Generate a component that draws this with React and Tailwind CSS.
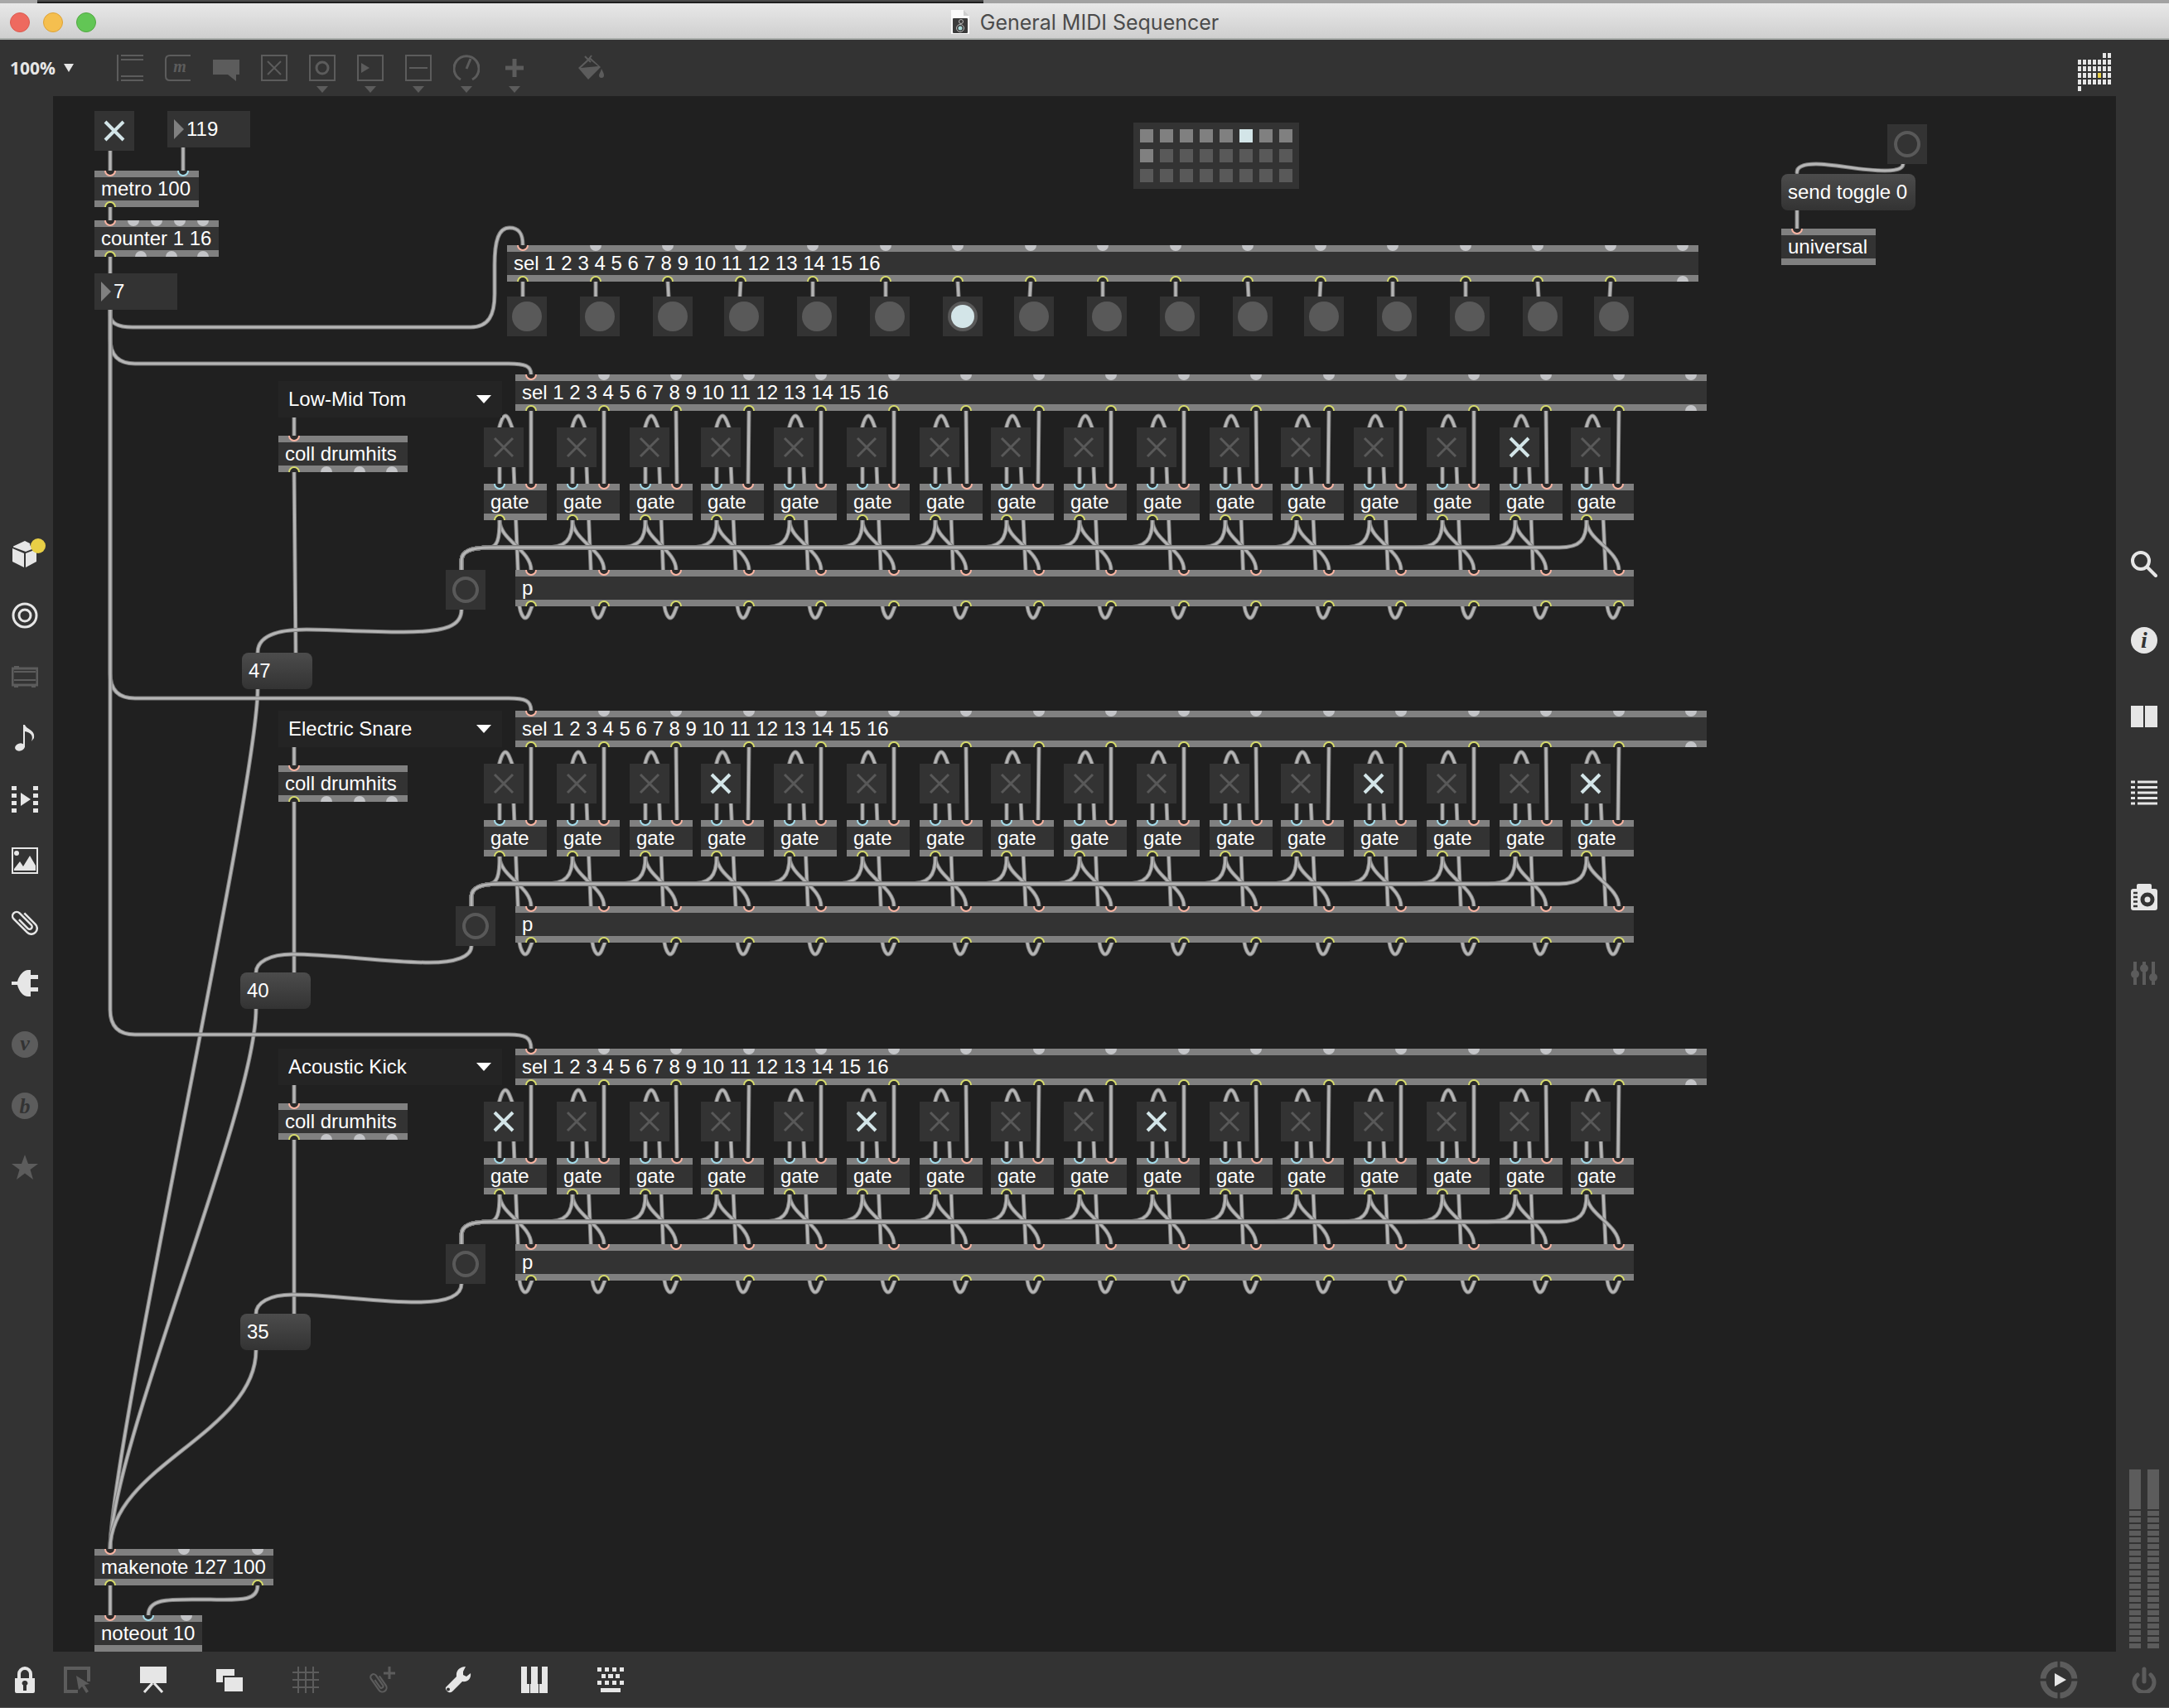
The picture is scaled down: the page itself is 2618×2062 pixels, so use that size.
import React from "react";

const OFFSETS = [0, 88, 176, 262, 350, 438, 526, 612, 700, 788, 876, 962, 1050, 1138, 1226, 1312];
const STEPS = OFFSETS.map((_, i) => i);
const PORT_STEP = Array.from({ length: 17 }, (_, i) => 19 + Math.round(i * 87.5));
const SEL_TEXT = "sel 1 2 3 4 5 6 7 8 9 10 11 12 13 14 15 16";

const TRACKS = [
  {
    name: "Low-Mid Tom", top: 336, feed: 323, menuY: 344, collY: 410, note: 47, noteX: 228, noteY: 672, bangX: 474, on: [14],
    cord: "M493 620C493 639 476 647 423 647C376 647 336 644 306 644C266 644 247 654 247 672",
    out: "M247 716C247 836 69 1634 69 1754",
    coll: "M291 454L293 672",
  },
  {
    name: "Electric Snare", top: 742, feed: 727, menuY: 742, collY: 808, note: 40, noteX: 226, noteY: 1058, bangX: 486, on: [3, 12, 15],
    cord: "M505 1026C505 1039 486 1046 454 1046C406 1046 336 1036 289 1036C261 1036 245 1046 245 1058",
    out: "M245 1102C245 1222 69 1634 69 1754",
    coll: "M291 852V1058",
  },
  {
    name: "Acoustic Kick", top: 1150, feed: 1133, menuY: 1150, collY: 1216, note: 35, noteX: 226, noteY: 1470, bangX: 474, on: [0, 5, 9],
    cord: "M493 1434C493 1447 479 1456 439 1456C390 1456 336 1447 289 1447C261 1447 245 1457 245 1470",
    out: "M245 1514C245 1614 69 1654 69 1754",
    coll: "M291 1260V1470",
  },
];

const hot = (...xs) => xs.map((x) => ({ x, c: "#f9b4a2" }));
const cold = (...xs) => xs.map((x) => ({ x, c: "#a4dcea" }));
const out = (...xs) => xs.map((x) => ({ x, c: "#d6db6a" }));
const idle = (...xs) => xs.map((x) => ({ x }));

/* ---------- patch cords ---------- */

function trackCords(t) {
  const gateTop = t.top + 132;
  const gateBottom = gateTop + 44;
  const pTop = t.top + 236;
  const pBottom = pTop + 44;
  const toggleTop = t.top + 64;
  const bus = gateBottom + 33;
  const bx = t.bangX + 19;
  const cords = [
    `M69 258V${t.feed - 30}Q69 ${t.feed} 99 ${t.feed}H550C570 ${t.feed} 577 ${t.feed + 3} 577 ${t.top}`,
    `M291 ${t.menuY + 42}V${t.collY}`,
    t.coll,
    t.cord,
    t.out,
  ];
  STEPS.forEach((i) => {
    const p = 558 + PORT_STEP[i];
    const g = 539 + OFFSETS[i];
    const turn = i === 0 ? `C${g} ${gateBottom + 24} ${g - 3} ${bus - 2} ${g - 11} ${bus}` : `C${g} ${gateBottom + 24} ${g - 8} ${bus} ${g - 33} ${bus}`;
    cords.push(
      `M${p} ${t.top + 44}L${g + 38} ${gateTop}`,
      `M${p + 1} ${pBottom}C${p - 2} ${pBottom + 8} ${p - 4} ${pBottom + 14} ${p - 7} ${pBottom + 14}C${p - 10} ${pBottom + 14} ${p - 13} ${pBottom + 7} ${p - 14} ${pBottom}L${g + 15} ${toggleTop}C${g + 12} ${toggleTop - 8} ${g + 10} ${toggleTop - 14} ${g + 7} ${toggleTop - 14}C${g + 4} ${toggleTop - 14} ${g + 1} ${toggleTop - 6} ${g - 1} ${toggleTop + 3}`,
      `M${g} ${toggleTop + 48}V${gateTop}`,
      `M${g} ${gateBottom}C${g} ${gateBottom + 24} ${p} ${gateBottom + 36} ${p} ${pTop}`,
      `M${g} ${gateBottom}${turn}H${bx + 35}C${bx + 12} ${bus} ${bx} ${bus + 4} ${bx} ${bus + 16}V${pTop}`
    );
  });
  return cords;
}

const CORDS = [
  "M69 66V90",
  "M157 62V90",
  "M69 134V150",
  "M69 194V214",
  "M69 258V264Q69 279 96 279H504C526 279 533 264 533 239V204C533 174 538 159 551 159C564 159 567 168 567 180",
  ...STEPS.map((i) => `M${548 + PORT_STEP[i]} 224L${567 + OFFSETS[i]} 242`),
  ...TRACKS.flatMap(trackCords),
  "M69 1798V1834",
  "M247 1798C247 1819 221 1815 181 1815C141 1815 115 1813 115 1834",
  "M2233 82C2233 88 2224 90 2211 90C2181 90 2151 82 2128 82C2116 82 2105 84 2105 92",
  "M2105 138V160",
];

function Cords() {
  return (
    <svg className="pointer-events-none absolute inset-0 size-full" fill="none" strokeLinecap="round" aria-hidden="true">
      {CORDS.map((d, i) => (
        <g key={i}>
          <path d={d} stroke="#7c7c7c" strokeWidth="5" />
          <path d={d} stroke="#b5b5b5" strokeWidth="3" />
        </g>
      ))}
    </svg>
  );
}

/* ---------- patcher objects ---------- */

function Node({ x, y, w, children }) {
  return (
    <div className="absolute" style={{ left: x, top: y, width: w }}>
      {children}
    </div>
  );
}

function Ports({ ports, y }) {
  return ports.map(({ x, c }) =>
    c ? <circle key={x} cx={x} cy={y} r="6" fill="#2b2b2b" stroke={c} strokeWidth="2" /> : <circle key={x} cx={x} cy={y} r="7" fill="#c3c4c7" />
  );
}

function Obj({ x, y, w, text, ins = [], outs = [] }) {
  return (
    <Node x={x} y={y} w={w}>
      <div className="border-y-8 border-[#808080] bg-[#333333] px-2 leading-7 whitespace-nowrap">{text}</div>
      <svg className="absolute inset-0 size-full" aria-hidden="true">
        <Ports ports={ins} y={0} />
        <Ports ports={outs} y={44} />
      </svg>
    </Node>
  );
}

function Toggle({ x, y, on, label }) {
  return (
    <Node x={x} y={y}>
      <input type="checkbox" aria-label={label} defaultChecked={on} className="peer block size-12 appearance-none bg-[#333333]" />
      <svg
        viewBox="0 0 48 48"
        className="pointer-events-none absolute inset-0 size-12 stroke-[#595959] stroke-3 peer-checked:stroke-[#d3e5e8] peer-checked:stroke-4"
        aria-hidden="true"
      >
        <path d="M13 13L35 35M35 13L13 35" />
      </svg>
    </Node>
  );
}

function Bang({ x, y, label, kind = "ring" }) {
  return (
    <Node x={x} y={y}>
      <button type="button" aria-label={label} className="block size-12 bg-[#333333]">
        <svg viewBox="0 0 48 48" className="size-12" aria-hidden="true">
          {kind === "ring" ? <circle cx="24" cy="24" r="14" fill="none" stroke="#595959" strokeWidth="4" /> : <circle cx="24" cy="24" r="18" fill="#595959" />}
          {kind === "lit" && <circle cx="24" cy="24" r="14" fill="#d3e5e8" />}
        </svg>
      </button>
    </Node>
  );
}

function NumberBox({ x, y, value, label }) {
  return (
    <Node x={x} y={y} w={100}>
      <input type="text" aria-label={label} defaultValue={value} className="block h-11 w-full bg-[#333333] pl-[23px] leading-7" />
      <svg viewBox="0 0 12 24" className="absolute top-[10px] left-2 h-6 w-3" aria-hidden="true">
        <path d="M0 0L12 12L0 24Z" fill="#808080" />
      </svg>
    </Node>
  );
}

function Message({ x, y, w, text }) {
  return (
    <Node x={x} y={y} w={w}>
      <button type="button" className="block h-11 w-full rounded-lg bg-linear-to-b from-[#4c4c4c] to-[#333333] px-2 text-left leading-7 whitespace-nowrap">
        {text}
      </button>
    </Node>
  );
}

function Menu({ x, y, value, label }) {
  return (
    <Node x={x} y={y} w={270}>
      <select aria-label={label} defaultValue={value} className="block h-11 w-full appearance-none bg-[#242424] pl-3 leading-7">
        {TRACKS.map((t) => (
          <option key={t.name}>{t.name}</option>
        ))}
      </select>
      <svg viewBox="0 0 18 10" className="pointer-events-none absolute top-[17px] right-[13px] h-[10px] w-[18px]" aria-hidden="true">
        <path d="M0 0H18L9 10Z" fill="#ffffff" />
      </svg>
    </Node>
  );
}

function Preset() {
  return (
    <Node x={1304} y={32} w={200}>
      <div className="grid grid-cols-8 gap-2 bg-[#333333] p-2">
        {Array.from({ length: 24 }, (_, i) => (
          <button
            key={i}
            type="button"
            aria-label={`Preset ${i + 1}`}
            className={i === 5 ? "h-4 bg-[#d3e5e8]" : i < 9 ? "h-4 bg-[#808080]" : "h-4 bg-[#595959]"}
          />
        ))}
      </div>
    </Node>
  );
}

function Track({ t }) {
  const first = PORT_STEP.slice(0, 16);
  return (
    <>
      <Menu x={272} y={t.menuY} value={t.name} label={`${t.name} instrument`} />
      <Obj x={272} y={t.collY} w={156} text="coll drumhits" ins={hot(19)} outs={[...out(19), ...idle(58, 98, 137)]} />
      <Obj x={558} y={t.top} w={1438} text={SEL_TEXT} ins={[...hot(19), ...idle(...PORT_STEP.slice(1))]} outs={[...out(...first), ...idle(PORT_STEP[16])]} />
      {OFFSETS.map((o, i) => (
        <React.Fragment key={o}>
          <Toggle x={520 + o} y={t.top + 64} on={t.on.includes(i)} label={`${t.name} step ${i + 1}`} />
          <Obj x={520 + o} y={t.top + 132} w={76} text="gate" ins={[...cold(19), ...hot(57)]} outs={out(19)} />
        </React.Fragment>
      ))}
      <Obj x={558} y={t.top + 236} w={1350} text="p" ins={hot(...first)} outs={out(...first)} />
      <Bang x={t.bangX} y={t.top + 236} label={`Trigger ${t.name}`} />
      <Message x={t.noteX} y={t.noteY} w={85} text={t.note} />
    </>
  );
}

function Patcher() {
  return (
    <main className="relative min-w-0 flex-1 overflow-hidden bg-[#202020] text-2xl text-white">
      <Cords />
      <Toggle x={50} y={18} on label="Run" />
      <NumberBox x={138} y={18} value="119" label="Tempo" />
      <Obj x={50} y={90} w={126} text="metro 100" ins={[...hot(19), ...cold(107)]} outs={out(19)} />
      <Obj x={50} y={150} w={150} text="counter 1 16" ins={[...hot(19), ...idle(47, 75, 103, 131)]} outs={[...out(19), ...idle(56, 93, 131)]} />
      <NumberBox x={50} y={214} value="7" label="Current step" />
      <Obj x={548} y={180} w={1438} text={SEL_TEXT} ins={[...hot(19), ...idle(...PORT_STEP.slice(1))]} outs={[...out(...PORT_STEP.slice(0, 16)), ...idle(PORT_STEP[16])]} />
      {OFFSETS.map((o, i) => (
        <Bang key={o} x={548 + o} y={242} kind={i === 6 ? "lit" : "dot"} label={`Step ${i + 1}`} />
      ))}
      <Preset />
      <Bang x={2214} y={34} label="Clear" />
      <Message x={2086} y={94} w={162} text="send toggle 0" />
      <Obj x={2086} y={160} w={114} text="universal" ins={hot(19)} />
      {TRACKS.map((t) => (
        <Track key={t.name} t={t} />
      ))}
      <Obj x={50} y={1754} w={216} text="makenote 127 100" ins={[...hot(19), ...idle(108, 197)]} outs={out(19, 197)} />
      <Obj x={50} y={1834} w={130} text="noteout 10" ins={[...hot(19), ...cold(65), ...idle(111)]} />
    </main>
  );
}

/* ---------- icons ---------- */

function Icon({ children, dim }) {
  return (
    <svg viewBox="0 0 32 32" className={dim ? "size-8 shrink-0 text-[#5c5c5c]" : "size-8 shrink-0 text-[#e6e6e6]"} fill="currentColor" aria-hidden="true">
      {children}
    </svg>
  );
}

const line = (w) => ({ fill: "none", stroke: "currentColor", strokeWidth: w });
const glyph = { fontFamily: "Liberation Serif, serif", fontStyle: "italic", fontWeight: 700, textAnchor: "middle" };
const CLIP = "M7 -8V11A7 7 0 0 1 -7 11V-12A5 5 0 0 1 3 -12V8A3 3 0 0 1 -3 8V-7";

const frame = <path d="M1 1H31V31H1Z" {...line(2)} />;

const TOOLS = [
  ["Object", <path key="a" d="M1 0V32M5 1H32M5 6H32M5 26H32M5 31H32" {...line(2)} />],
  ["Message", <g key="a"><path d="M31 1H6Q1 1 1 6V26Q1 31 6 31H31" {...line(2)} /><text x="18" y="21" fontSize="20" {...glyph}>m</text></g>],
  ["Comment", <path key="a" d="M0 6H32V24H28V32L18 24H0Z" />],
  ["Toggle", <g key="a">{frame}<path d="M8 8L24 24M24 8L8 24" {...line(2)} /></g>],
  ["Button", <g key="a">{frame}<circle cx="16" cy="16" r="7" {...line(3)} /></g>, true],
  ["Number", <g key="a">{frame}<path d="M5 10L15 16L5 22Z" /></g>, true],
  ["Slider", <g key="a">{frame}<path d="M5 16H27" {...line(2)} /></g>, true],
  ["Dial", <path key="a" d="M9 30A15 15 0 1 1 23 30M16 17L21 5" {...line(3)} />, true],
  ["Add", <path key="a" d="M16 5V27M5 16H27" {...line(5)} />, true],
];

const LEFT = [
  ["Packages", false, <g key="a"><path d="M2 6.500L16 0L22 3Q22 8 27 9L17 13L2 7.500ZM1 9L15 15V32L1 25ZM17 15L30 10V25L17 32Z" /></g>],
  ["Targets", false, <g key="a"><circle cx="16" cy="16" r="14" {...line(3)} /><circle cx="16" cy="16" r="7" {...line(3)} /></g>],
  ["Modules", true, <g key="a"><path d="M1 6H31V26H1Z" {...line(3)} /><path d="M3 10H29M3 20H29" {...line(2)} /><path d="M3 5H9V3H3ZM3 27H8V29H3ZM24 27H29V29H24Z" /></g>],
  ["Audio", false, <g key="a"><ellipse cx="10" cy="27" rx="6" ry="4.500" transform="rotate(-18 10 27)" /><path d="M14 0H16C18 6 29 6 27 16L24 20C27 12 22 9 16 8V27H14Z" /></g>],
  ["Video", false, <path key="a" d="M0 0H6V5H0ZM0 9H6V14H0ZM0 18H6V23H0ZM0 27H6V32H0ZM26 0H32V5H26ZM26 9H32V14H26ZM26 18H32V23H26ZM26 27H32V32H26ZM11 8L23 16L11 24Z" />],
  ["Images", false, <g key="a"><path d="M1 1H31V31H1Z" {...line(2)} /><circle cx="6" cy="7" r="3" /><path d="M3 28V26L10 17L14 23L22 10L29 22V28Z" /></g>],
  ["Attachments", false, <path key="a" d={CLIP} transform="translate(16 16) rotate(-45)" {...line(2.5)} />],
  ["Plug-ins", false, <path key="a" d="M0 14H7C9 6 15 0 20 0H23V6H32V11H23V21H32V26H23V32H20C14 32 9 26 7 18H0Z" />],
  ["Vizzie", true, <g key="a"><circle cx="16" cy="16" r="16" /><text x="16" y="23" fontSize="26" fill="#333333" {...glyph}>v</text></g>],
  ["BEAP", true, <g key="a"><circle cx="16" cy="16" r="16" /><text x="16" y="25" fontSize="26" fill="#333333" {...glyph}>b</text></g>],
  ["Favorites", true, <path key="a" d="M16 1L20 12H32L22.500 19L26 31L16 23.500L6 31L9.500 19L0 12H12Z" />],
];

const RIGHT = [
  ["Search", false, <g key="a"><circle cx="12" cy="12" r="10" {...line(4)} /><path d="M20 20L30 30" strokeLinecap="round" {...line(4)} /></g>],
  ["Inspector", false, <g key="a"><circle cx="16" cy="16" r="16" /><text x="16" y="25" fontSize="28" fill="#333333" {...glyph}>i</text></g>],
  ["Reference", false, <path key="a" d="M0 3H15V29H0ZM17 3H32V29H17Z" />],
  ["Console", false, <path key="a" d="M0 3H5M8 3H32M0 9.500H5M8 9.500H32M0 16H5M8 16H32M0 22.500H5M8 22.500H32M0 29H5M8 29H32" {...line(3)} />],
  ["Snapshots", false, <g key="a"><path d="M7 2Q7 0 9 0H23Q25 0 25 2V6H29Q32 6 32 9V29Q32 32 29 32H3Q0 32 0 29V9Q0 6 3 6H7Z" /><circle cx="20" cy="19" r="6" fill="none" stroke="#333333" strokeWidth="5" /><path d="M3 11H8M3 16H8M3 21.500H8M3 27H8" stroke="#333333" strokeWidth="2.500" /></g>],
  ["Parameters", true, <g key="a"><path d="M5 2V30M16 2V30M27 2V30" {...line(4)} /><circle cx="5" cy="17" r="5" /><circle cx="16" cy="10" r="5" /><circle cx="27" cy="21" r="5" /></g>],
];

const BOTTOM = [
  ["Select", true, <g key="a"><path d="M17 30H2V2H30V18" {...line(4)} /><path d="M15 11L31 21L25 22L30 30L27 32L22 24L18 28Z" /></g>],
  ["Presentation", false, <g key="a"><path d="M0 0H32V20H0Z" /><path d="M15 20L5 31M17 20L27 31" {...line(3)} /></g>],
  ["New view", false, <path key="a" d="M0 3H22V11H8V19H0ZM10 13H32V30H10Z" />],
  ["Grid", true, <path key="a" d="M7 0V32M16 0V32M25 0V32M0 7H32M0 16H32M0 25H32" {...line(2)} />],
  ["Attach", true, <g key="a"><path d={CLIP} transform="translate(12 19) rotate(-35) scale(0.72)" {...line(3)} /><path d="M25 0V15M18 8H32" {...line(3)} /></g>],
  ["Debug", false, <path key="a" fillRule="evenodd" d="M25 0L22 6V10L26 12L31 8C32 14 28 19 21 18L9 30A5 5 0 0 1 1 25L14 12C13 5 18 0 25 0ZM4 25.500A2 2 0 1 0 4 29.500A2 2 0 1 0 4 25.500Z" />],
  ["MIDI", false, <path key="a" d="M0 0H7V21H10V32H0ZM12 21V0H20V21H21V32H11V21ZM25 0H32V32H22V21H25Z" />],
  ["Keyboard", false, <path key="a" d="M0 1H5V6H0ZM9 1H14V6H9ZM18 1H23V6H18ZM27 1H32V6H27ZM5 9H10V14H5ZM13 9H19V14H13ZM22 9H27V14H22ZM0 17H5V22H0ZM9 17H14V22H9ZM18 17H23V22H18ZM27 17H32V22H27ZM4 26H28V31H4Z" />],
];

/* ---------- window chrome ---------- */

function TitleBar() {
  return (
    <header>
      <div className="flex h-1">
        <div className="w-[45px] bg-[#a8a8a8]" />
        <div className="w-[1142px] border-b-2 border-[#202020] bg-[#4a4a4a]" />
        <div className="flex-1 bg-[#a2a2a2]" />
      </div>
      <div className="grid h-11 grid-cols-3 items-center border-b-2 border-[#a9adaa] bg-linear-to-b from-[#e8e8e8] to-[#cfcfcf] pt-[3px]">
        <div className="flex gap-4 pl-3">
          <button type="button" aria-label="Close" className="size-6 rounded-full border border-[#dc5b50] bg-[#ee6a5f]" />
          <button type="button" aria-label="Minimize" className="size-6 rounded-full border border-[#dea236] bg-[#f5bf4f]" />
          <button type="button" aria-label="Zoom" className="size-6 rounded-full border border-[#52a842] bg-[#62c655]" />
        </div>
        <h1 className="flex items-center justify-center gap-3 text-[25px] leading-8 whitespace-nowrap text-[#4b4b4b]" style={{ fontFamily: "Inter, sans-serif" }}>
          <svg viewBox="0 0 24 30" className="h-[30px] w-6" aria-hidden="true">
            <path d="M1 0H16L23 7V29H1Z" fill="#fafafa" />
            <path d="M16 0V7H23Z" fill="#cfcfcf" />
            <rect x="3" y="10" width="18" height="18" rx="1" fill="#3a3a3a" />
            <circle cx="13" cy="14" r="2.500" fill="none" stroke="#bbbbbb" />
            <circle cx="12" cy="22" r="4.500" fill="none" stroke="#bbbbbb" />
            <circle cx="12" cy="22" r="2.500" fill="#a9d8d8" />
          </svg>
          General MIDI Sequencer
        </h1>
      </div>
    </header>
  );
}

function MaxLogo() {
  const cells = [];
  for (let r = 0; r < 6; r++) {
    for (let c = 0; c < 7; c++) {
      if ((r === 0 && c < 5) || (r === 5 && c > 0)) continue;
      cells.push(<rect key={`${r}-${c}`} x={c * 6} y={r * 8} width="4" height="6" fill={r === 3 && c === 4 ? "#e8cf46" : "#e6e6e6"} />);
    }
  }
  return (
    <svg viewBox="0 0 40 46" className="h-[46px] w-10" aria-hidden="true">
      {cells}
    </svg>
  );
}

function Toolbar() {
  return (
    <nav className="flex h-[68px] items-center" aria-label="Objects">
      <button
        type="button"
        className="flex w-32 items-center gap-[10px] pl-3 text-[21px] leading-7 font-bold text-[#e6e6e6]"
        style={{ fontFamily: "Open Sans, sans-serif" }}
      >
        100%
        <svg viewBox="0 0 12 10" className="h-[10px] w-3" fill="currentColor" aria-hidden="true">
          <path d="M0 0H12L6 10Z" />
        </svg>
      </button>
      {TOOLS.map(([name, art, more]) => (
        <button key={name} type="button" aria-label={name} className="relative flex h-full w-[58px] items-center justify-center">
          <Icon dim>{art}</Icon>
          {more && (
            <svg viewBox="0 0 14 8" className="absolute bottom-1 left-[22px] h-2 w-[14px]" fill="#5c5c5c" aria-hidden="true">
              <path d="M0 0H14L7 8Z" />
            </svg>
          )}
        </button>
      ))}
      <button type="button" aria-label="Format" className="ml-[34px] flex h-full w-[58px] items-center justify-center">
        <Icon dim>
          <path d="M1 16L15 3L28 15L13 30ZM15 6L4 16L25 14Z" fillRule="evenodd" />
          <path d="M9 2L16 9M14 5L17 1" {...line(2)} />
          <path d="M29 17C31 21 32 23 32 25A3 3 0 0 1 26 25C26 23 28 21 29 17Z" />
        </Icon>
      </button>
      <button type="button" aria-label="Max" className="mr-[70px] ml-auto pt-[10px]">
        <MaxLogo />
      </button>
    </nav>
  );
}

function LeftBar() {
  return (
    <aside className="flex w-16 flex-col justify-center pr-1 pb-8">
      {LEFT.map(([name, dim, art], i) => (
        <button key={name} type="button" aria-label={name} className="relative flex h-[74px] items-center justify-center">
          <Icon dim={dim}>{art}</Icon>
          {i === 0 && <span className="absolute top-[18px] right-[5px] size-[18px] rounded-full bg-[#e8cf46]" />}
        </button>
      ))}
    </aside>
  );
}

function Meter() {
  return (
    <div className="flex w-[14px] flex-col gap-[2px]">
      <div className="h-12 bg-[#5c5c5c]" />
      {Array.from({ length: 21 }, (_, i) => (
        <div key={i} className="h-[6px] bg-[#5c5c5c]" />
      ))}
    </div>
  );
}

function RightBar() {
  return (
    <aside className="flex w-16 flex-col pt-[519px]">
      {RIGHT.map(([name, dim, art], i) => (
        <button
          key={name}
          type="button"
          aria-label={name}
          className={i === 4 ? "mt-[34px] flex h-[92px] items-center justify-center pl-1" : "flex h-[92px] items-center justify-center pl-1"}
        >
          <Icon dim={dim}>{art}</Icon>
        </button>
      ))}
      <div className="mt-auto flex gap-2 pb-1 pl-4">
        <Meter />
        <Meter />
      </div>
    </aside>
  );
}

function BottomBar() {
  return (
    <footer className="flex h-[68px] items-center border-b border-[#555555] pl-[13px]">
      <button type="button" aria-label="Lock" className="flex h-full w-[34px] items-center justify-center">
        <Icon>
          <path d="M9 15V9A7 7 0 0 1 23 9V15" {...line(4)} />
          <path fillRule="evenodd" d="M4 14H28V30Q28 32 26 32H6Q4 32 4 30ZM16 17A3 3 0 0 0 14 22.500V29H18V22.500A3 3 0 0 0 16 17Z" />
        </Icon>
      </button>
      {BOTTOM.map(([name, dim, art]) => (
        <button key={name} type="button" aria-label={name} className="flex h-full w-[92px] items-center justify-center">
          <Icon dim={dim}>{art}</Icon>
        </button>
      ))}
      <button type="button" aria-label="Transport" className="ml-auto flex h-full w-[92px] items-center justify-center">
        <svg viewBox="0 0 46 46" className="size-[46px]" aria-hidden="true">
          <circle cx="23" cy="23" r="19" fill="none" stroke="#5c5c5c" strokeWidth="7" />
          <path d="M23 0V46M0 23H46" stroke="#333333" strokeWidth="3" />
          <circle cx="23" cy="23" r="15" fill="#333333" />
          <path d="M18 15L32 23L18 31Z" fill="#e6e6e6" />
        </svg>
      </button>
      <button type="button" aria-label="Audio power" className="ml-[23px] flex h-full w-16 items-center justify-center pl-1">
        <Icon dim>
          <path d="M8 10A12 12 0 1 0 24 10M16 3V18" strokeLinecap="round" {...line(5)} />
        </Icon>
      </button>
    </footer>
  );
}

export default function App() {
  return (
    <div className="flex min-h-screen flex-col bg-[#333333]" style={{ fontFamily: "Liberation Sans, Arial, sans-serif" }}>
      <TitleBar />
      <Toolbar />
      <div className="flex flex-1">
        <LeftBar />
        <Patcher />
        <RightBar />
      </div>
      <BottomBar />
    </div>
  );
}
